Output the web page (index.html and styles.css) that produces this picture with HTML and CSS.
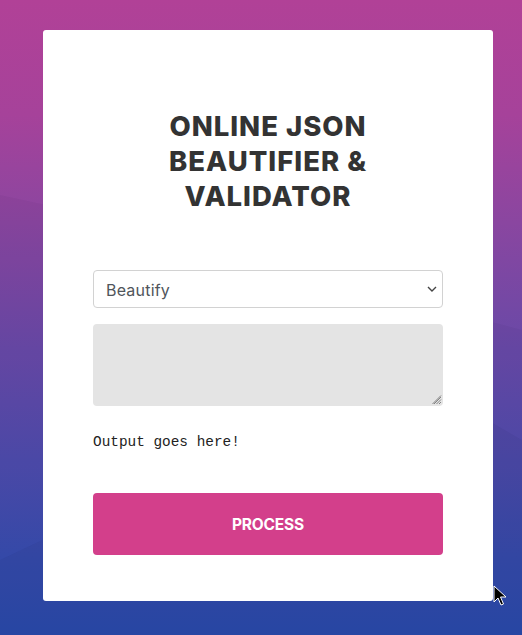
FILE: index.html
```html
<!DOCTYPE html>
<html lang="en">
<head>
<meta charset="utf-8">
<title>Online JSON Beautifier &amp; Validator</title>
<link rel="stylesheet" href="styles.css">
</head>
<body>
<svg class="bg-waves" width="522" height="635" viewBox="0 0 522 635" aria-hidden="true">
  <polygon points="0,195 60,208 522,330 522,635 0,635" fill="rgba(20,10,60,0.04)"/>
  <polygon points="400,370 522,440 522,635 0,635 0,560" fill="rgba(20,10,60,0.05)"/>
</svg>
<main class="card">
  <h1 class="title">ONLINE JSON BEAUTIFIER &amp; VALIDATOR</h1>
  <div class="select-wrap">
    <select class="mode">
      <option>Beautify</option>
      <option>Validate</option>
    </select>
    <svg class="chevron" width="10" height="6" viewBox="0 0 10 6"><path d="M1 1l4 4 4-4" fill="none" stroke="#444" stroke-width="1.4"/></svg>
  </div>
  <div class="area-wrap">
    <textarea class="input"></textarea>
    <svg class="grip" width="10" height="10" viewBox="0 0 10 10"><path d="M9 2L2 9M9 4.5L4.5 9M9 7L7 9M9 0.5L0.5 9" stroke="#777" stroke-width="0.9"/></svg>
  </div>
  <pre class="output">Output goes here!</pre>
  <button class="process">PROCESS</button>
</main>
<svg class="cursor" width="14" height="22" viewBox="0 0 14 22"><path d="M1 1v16l4-4 3 7 2.5-1-3-7h5.5z" fill="#000" stroke="#fff" stroke-width="1"/></svg>
</body>
</html>
```
FILE: styles.css
```css
html, body {
  margin: 0;
  padding: 0;
}
body {
  width: 522px;
  height: 635px;
  overflow: hidden;
  position: relative;
  background: linear-gradient(to bottom, #b14197 0%, #a6429a 18%, #8a46a0 35%, #6849a7 55%, #4e4bab 72%, #364cad 88%, #2a4cae 100%);
  font-family: "Inter", "Liberation Sans", sans-serif;
  padding-top: 30px;
  box-sizing: border-box;
}
.bg-waves {
  position: absolute;
  left: 0;
  top: 0;
  z-index: 0;
}
.card {
  position: relative;
  z-index: 1;
  margin-left: 43px;
  width: 450px;
  height: 571px;
  box-sizing: border-box;
  background: #fff;
  border-radius: 3px;
  padding: 79px 50px 0;
  display: flex;
  flex-direction: column;
}
.title {
  margin: 0 auto;
  width: 260px;
  text-align: center;
  font-family: "Inter", sans-serif;
  font-weight: 800;
  font-size: 27.5px;
  line-height: 35px;
  color: #333;
  letter-spacing: 1px;
}
.select-wrap {
  position: relative;
  margin-top: 56px;
}
.mode {
  appearance: none;
  -webkit-appearance: none;
  width: 100%;
  height: 38px;
  box-sizing: border-box;
  border: 1px solid #d2d2d2;
  border-radius: 4px;
  background: #fff;
  padding: 2px 12px 0;
  font-family: "Inter", sans-serif;
  font-size: 16px;
  letter-spacing: 0.2px;
  color: #50555b;
  display: block;
}
.chevron {
  position: absolute;
  right: 6px;
  top: 16px;
}
.area-wrap {
  position: relative;
  margin-top: 16px;
}
.input {
  display: block;
  width: 100%;
  height: 82px;
  box-sizing: border-box;
  border: none;
  border-radius: 4px;
  background: #e4e4e4;
  resize: none;
  margin: 0;
}
.grip {
  position: absolute;
  right: 1px;
  bottom: 1px;
}
.output {
  margin: 28px 0 0;
  font-family: "Liberation Mono", monospace;
  font-size: 14.4px;
  line-height: 16px;
  color: #222;
}
.process {
  margin-top: 43px;
  height: 62px;
  width: 100%;
  border: none;
  border-radius: 4px;
  background: #d33f8b;
  color: #fff;
  font-family: "Inter", sans-serif;
  font-weight: 700;
  font-size: 15.5px;
  letter-spacing: -0.2px;
}
.cursor {
  position: absolute;
  left: 493px;
  top: 585px;
  z-index: 2;
}
```
